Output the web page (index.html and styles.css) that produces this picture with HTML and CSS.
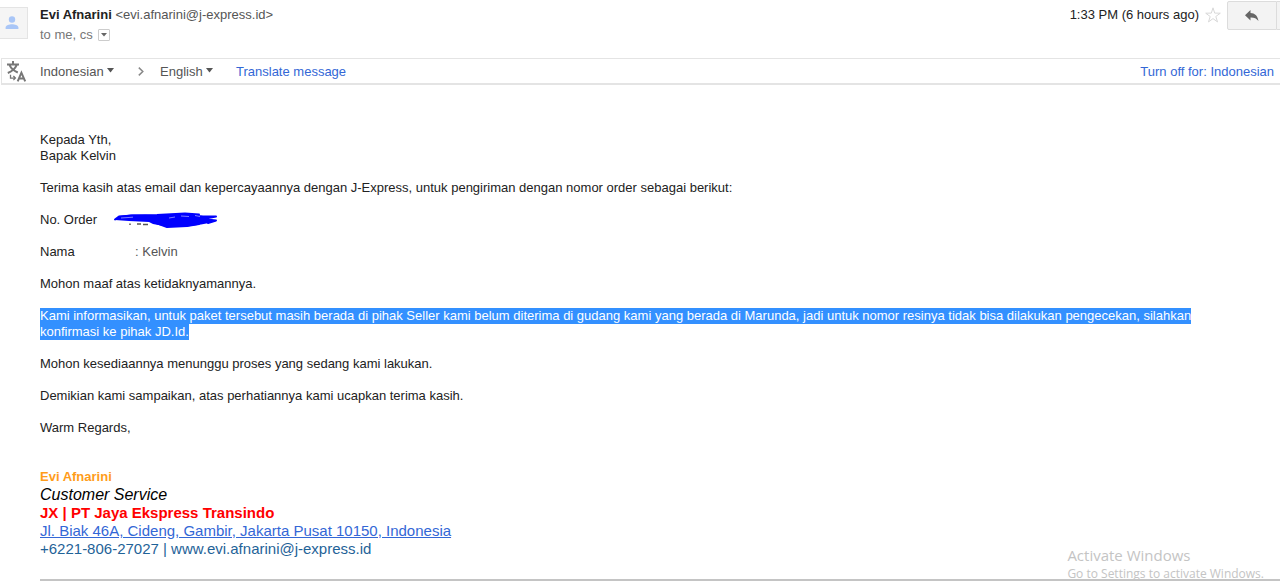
FILE: index.html
```html
<!DOCTYPE html>
<html lang="id">
<head>
<meta charset="utf-8">
<title>Evi Afnarini</title>
<link rel="stylesheet" href="styles.css">
</head>
<body>
<header class="message-header">
  <div class="avatar">
    <svg width="14" height="14" viewBox="0 0 14 14" aria-hidden="true"><circle cx="7" cy="3.500" r="3.200" fill="#a9c6f7"/><path d="M.6 13v-1.600C.6 9.200 4.400 8.200 7 8.200s6.400 1 6.400 3.200V13z" fill="#a9c6f7"/></svg>
  </div>
  <div class="people">
    <div class="sender"><strong>Evi Afnarini</strong> <span class="address">&lt;evi.afnarini@j-express.id&gt;</span></div>
    <div class="recipients">to me, cs
      <button class="details" aria-label="Show details"><svg width="6" height="4" viewBox="0 0 6 4"><path d="M0 0h6L3 3.600z" fill="#666"/></svg></button>
    </div>
  </div>
  <div class="meta">
    <span class="time">1:33 PM (6 hours ago)</span>
    <button class="star" aria-label="Star"><svg width="16" height="16" viewBox="0 0 16 16"><path d="M8 .8l1.700 5.300 5.600.1-4.500 3.300 1.700 5.400L8 11.600l-4.500 3.300 1.700-5.400L.7 6.200l5.600-.1z" fill="#fff" stroke="#d8d8d8"/></svg></button>
    <button class="reply" aria-label="Reply"><svg width="14" height="12" viewBox="0 0 14 12"><path d="M5.500 0v3.100c4.300.2 7 2.400 8 7.900-2-2.700-4.400-3.700-8-3.600v3.200L0 5.300z" fill="#666"/></svg></button>
    <div class="more"></div>
  </div>
</header>
<div class="translate-bar">
  <svg class="translate-icon" width="20" height="21" viewBox="0 0 20 21" fill="none" stroke="#777" aria-hidden="true"><path d="M0 3.400h12M6 0v3.400M2.600 4.200C4 7.600 6.500 9.700 10.800 11.500M9.600 4.200C8 8.200 5 10.400.8 12" stroke-width="2"/><path d="M3.500 13.800v3.300h4.500M6.400 15l2 2.100-2 2" stroke-width="1.300"/><path d="M10.700 20.300l3.700-8.600 3.800 8.600M12 17.400h5" stroke-width="2"/></svg>
  <label class="language source"><select aria-label="Source language"><option>Indonesian</option></select><svg width="7" height="5" viewBox="0 0 7 5"><path d="M0 0h7L3.500 4.500z" fill="#555"/></svg></label>
  <svg class="chevron" width="6" height="9" viewBox="0 0 6 9" fill="none" stroke="#888" stroke-width="1.500" aria-hidden="true"><path d="M.8.600l4 3.900-4 3.900"/></svg>
  <label class="language target"><select aria-label="Target language"><option>English</option></select><svg width="7" height="5" viewBox="0 0 7 5"><path d="M0 0h7L3.500 4.500z" fill="#555"/></svg></label>
  <a class="translate-link" href="#">Translate message</a>
  <a class="turn-off" href="#">Turn off for: Indonesian</a>
</div>
<main class="message">
  <p>Kepada Yth,<br>Bapak Kelvin</p>
  <p>Terima kasih atas email dan kepercayaannya dengan J-Express, untuk pengiriman dengan nomor order sebagai berikut:</p>
  <dl class="order">
    <dt>No. Order</dt>
    <dd class="redacted"><svg width="106" height="18" viewBox="0 0 106 18" role="img" aria-label="Redacted"><path d="M17 11.500v1.500M24 12h4M30 12.500h5" stroke="#555" stroke-width="1.500"/><path d="M6 4L18 2.500 44 3 56 2 74 1.500 86 3 90 4 103 4 92 6.500 103 9 96 11 88 12.500 74 14.500 56 15 40 12 36 10 16 9 2 8z" fill="#0000fe"/><path d="M2 7.500L6 4.500 20 3.500 44 3 72 1.500 86 2.500M88 4.500L103 4.500 90 7 103 8.500 95 11M42 10.500L54 15 74 14 86 12" fill="none" stroke="#0000fe" stroke-width="2" stroke-linecap="round" stroke-linejoin="round"/><path d="M8 6L20 5.200M56 6l6-1M68 4l8 .5M82 3.500l5 1" stroke="#fff" stroke-width=".700" opacity=".7"/></svg></dd>
    <dt>Nama</dt>
    <dd class="name">: Kelvin</dd>
  </dl>
  <p>Mohon maaf atas ketidaknyamannya.</p>
  <p><mark>Kami informasikan, untuk paket tersebut masih berada di pihak Seller kami belum diterima di gudang kami yang berada di Marunda, jadi untuk nomor resinya tidak bisa dilakukan pengecekan, silahkan konfirmasi ke pihak JD.Id.</mark></p>
  <p>Mohon kesediaannya menunggu proses yang sedang kami lakukan.</p>
  <p>Demikian kami sampaikan, atas perhatiannya kami ucapkan terima kasih.</p>
  <p>Warm Regards,</p>
  <address class="signature">
    <div class="sig-name">Evi Afnarini</div>
    <div class="sig-role">Customer Service</div>
    <div class="sig-company">JX | PT Jaya Ekspress Transindo</div>
    <div><a class="sig-place" href="#">Jl. Biak 46A, Cideng, Gambir, Jakarta Pusat 10150, Indonesia</a></div>
    <div class="sig-contact"><a href="#">+6221-806-27027</a> | <a href="#">www.evi.afnarini@j-express.id</a></div>
  </address>
  <hr>
</main>
<aside class="watermark">
  <div class="watermark-title">Activate Windows</div>
  <div>Go to Settings to activate Windows.</div>
</aside>
</body>
</html>
```
FILE: styles.css
```css
* { box-sizing: border-box; }
body {
  margin: 0;
  background: #fff;
  color: #222;
  font: 13px/16px "Liberation Sans", Arial, sans-serif;
  overflow: hidden;
}
a { color: #3367d6; text-decoration: none; }
button, select { margin: 0; padding: 0; font: inherit; color: inherit; }
button { display: flex; align-items: center; justify-content: center; border: 0; background: none; }

.message-header { display: flex; align-items: flex-start; height: 58px; }
.avatar {
  display: flex; align-items: center; justify-content: center;
  width: 28px; height: 32px; margin-top: 7px; padding-right: 4px;
  border: 1px solid #e4e4e4; border-left: 0; background: #f5f5f5;
}
.people { flex: 1; padding: 5px 0 0 12px; line-height: 20px; }
.address { color: #555; }
.recipients { display: flex; align-items: center; gap: 5px; color: #777; }
.details { width: 12px; height: 12px; border: 1px solid #ccc; border-radius: 1px; }
.meta { display: flex; align-items: flex-start; }
.time { line-height: 20px; padding-top: 5px; }
.star { margin: 7px 6px 0 6px; }
.reply { width: 50px; height: 29px; margin-top: 1px; border: 1px solid #dcdcdc; border-radius: 2px 0 0 2px; background: #f3f3f3; }
.more { width: 3px; height: 29px; margin-top: 1px; border: solid #dcdcdc; border-width: 1px 0; background: #f3f3f3; }

.translate-bar {
  display: flex; align-items: center; height: 27px; margin-left: 1px; padding: 1px 6px 0 5px;
  border: solid #e4e4e4; border-width: 1px 0 2px 1px; color: #555;
}
.translate-icon { margin-right: 13px; }
.language { display: flex; align-items: center; gap: 3px; }
.language svg { margin-bottom: 3px; }
.language select { appearance: none; border: 0; background: none; }
.chevron { margin: 0 16px 0 24px; }
.translate-link { margin-left: 23px; }
.turn-off { margin-left: auto; }

.message { padding: 47px 0 0 40px; }
.message p { margin: 0 48px 16px 0; }
mark { padding-bottom: 1px; background: #3390ff; color: #fff; }
.order { display: grid; grid-template-columns: 73px 1fr; row-gap: 16px; margin: 0 0 16px; }
.order dd { margin: 0; }
.redacted { height: 16px; }
.redacted svg { display: block; }
.name { padding-left: 22px; color: #555; }
.signature { margin-top: 32px; font-style: normal; font-size: 15px; line-height: 18px; }
.sig-name { color: #ff9c1a; font-size: 13px; font-weight: bold; }
.sig-role { color: #000; font-size: 16px; font-style: italic; }
.sig-company { color: #f00; font-weight: bold; }
.sig-place { text-decoration: underline; }
.sig-contact, .sig-contact a { color: #1f6398; }
hr { margin: 21px 0 0; border: 0; border-top: 2px solid #c4c4c4; }

.watermark {
  position: absolute; right: 16px; bottom: 0;
  color: #c4c4c4; font: 12px/18px "Open Sans", "Noto Sans", sans-serif;
}
.watermark-title { font-size: 15px; line-height: 20px; }
```
